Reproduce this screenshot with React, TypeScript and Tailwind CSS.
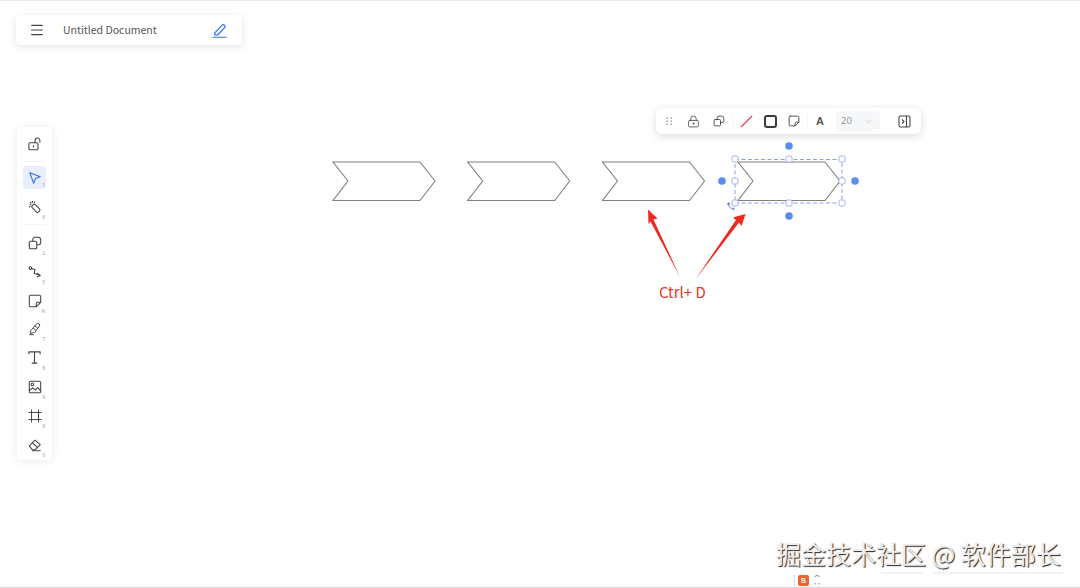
import React from 'react';
import { Menu, LockKeyhole, ChevronDown } from 'lucide-react';

// small stroke icon wrapper, 16px box
const Ico: React.FC<{ children: React.ReactNode; color?: string; size?: number; sw?: number }> = ({ children, color = '#444', size = 14, sw = 1.2 }) => (
  <svg width={size} height={size} viewBox="0 0 16 16" fill="none" stroke={color} strokeWidth={sw} strokeLinecap="round" strokeLinejoin="round">
    {children}
  </svg>
);

const CopyShape = ({ size = 14 }: { size?: number }) => (
  <Ico size={size}>
    <rect x="1.500" y="6" width="8.500" height="8.500" rx="1.500" />
    <path d="M5.500 6V4a2.500 2.500 0 0 1 2.500-2.500h3.500A3 3 0 0 1 14.500 4.500v3A2.500 2.500 0 0 1 12 10h-2" />
  </Ico>
);

const Note = ({ size = 14 }: { size?: number }) => (
  <Ico size={size}>
    <path d="M3 1.500h10A1.500 1.500 0 0 1 14.500 3v6.500l-5 5H3A1.500 1.500 0 0 1 1.500 13V3A1.500 1.500 0 0 1 3 1.500z" />
    <path d="M14.500 9.500H11a1.500 1.500 0 0 0-1.500 1.500v3.500" />
  </Ico>
);

type ToolItem = { key: string; hint?: string; icon: React.ReactNode; active?: boolean; h: string; cls?: string };

const tools: (ToolItem | 'sep')[] = [
  {
    key: 'lock', h: 'h-[29px]',
    icon: (
      <Ico>
        <rect x="1" y="6.500" width="10.500" height="8" rx="1.500" />
        <path d="M8 6.500V4a2.800 2.800 0 0 1 5.600 0v2M6.200 9.800v1.500" />
      </Ico>
    ),
  },
  'sep',
  {
    key: 'select', hint: '1', active: true, h: 'h-[23px]',
    icon: (
      <Ico color="#2f6fe4">
        <path d="M2 2l12 4.500-5.500 2-2 5.500z" />
      </Ico>
    ),
  },
  {
    key: 'magic', hint: '6', h: 'h-[29px]', cls: 'mt-[3px]',
    icon: (
      <Ico>
        <rect x="6.500" y="4.500" width="5" height="10" rx="1.500" transform="rotate(-45 9 9.500)" />
        <path d="M2 5.500h1.500M5 1.500V3M2.500 2.500l1 1M8 2l-.8.8M1.500 8l1-.6" />
      </Ico>
    ),
  },
  'sep',
  { key: 'shape', hint: '2', h: 'h-[29px]', icon: <CopyShape /> },
  {
    key: 'connector', hint: '5', h: 'h-[29px]',
    icon: (
      <Ico>
        <circle cx="2.800" cy="3.500" r="1.500" />
        <path d="M4.500 4l3.500 1.500-1 4 5.500 2" />
        <path d="M11 9.500l3 2.500-3.500 1.500" />
      </Ico>
    ),
  },
  { key: 'note', hint: 'N', h: 'h-[29px]', icon: <Note /> },
  {
    key: 'pen', hint: '7', h: 'h-[28px]',
    icon: (
      <Ico sw={1.1}>
        <path d="M3.500 9.500l6-7a2 2 0 0 1 3.500 2.500l-5.500 7-4.500 1z" />
        <path d="M6 7l3 2.500M8 4.500l3 2.500M2 14.500h4" />
      </Ico>
    ),
  },
  {
    key: 'text', hint: '8', h: 'h-[29px]',
    icon: (
      <Ico size={15}>
        <path d="M2 4V2h12v2M8 2v12M5.500 14h5" />
      </Ico>
    ),
  },
  {
    key: 'image', hint: '4', h: 'h-[29px]',
    icon: (
      <Ico>
        <rect x="1.500" y="1.500" width="13" height="13" rx="1.500" />
        <circle cx="5" cy="5" r="1.500" />
        <path d="M1.500 12l4-3 3 2.500 2.500-3 3.500 4" />
      </Ico>
    ),
  },
  {
    key: 'frame', hint: '9', h: 'h-[29px]',
    icon: (
      <Ico sw={1.1}>
        <path d="M4 1v14M12 1v14M1 4h14M1 12h14" />
      </Ico>
    ),
  },
  {
    key: 'eraser', hint: '0', h: 'h-[29px]',
    icon: (
      <Ico>
        <path d="M1.500 9l6.500-6.500 6 5-6 6H5z" />
        <path d="M5 5.500l6 5.500M5 14.500h9" />
      </Ico>
    ),
  },
];

const LeftToolbar = () => (
  <div className="absolute left-[17px] top-[127px] w-[35px] h-[333px] bg-white rounded shadow-[0_1px_8px_rgba(0,0,0,0.09)] flex flex-col items-center pt-[2px]">
    {tools.map((t, i) =>
      t === 'sep' ? (
        <div key={i} className={`w-[22px] h-px bg-gray-100 shrink-0 ${i === 1 ? 'mt-[3px] mb-[4px]' : 'mt-[3px] mb-[3px]'}`} />
      ) : (
        <div
          key={t.key}
          className={`relative w-[23px] ${t.h} ${t.cls ?? ''} shrink-0 flex items-center justify-center rounded-sm ${t.active ? 'bg-[#e8eefc]' : ''}`}
        >
          {t.icon}
          {t.hint && <span className="absolute right-[1px] bottom-[1px] text-[5px] leading-none text-gray-400">{t.hint}</span>}
        </div>
      )
    )}
  </div>
);

const Header = () => (
  <div className="absolute left-[16px] top-[15px] w-[226px] h-[30px] bg-white rounded shadow-[0_2px_8px_rgba(0,0,0,0.1)] flex items-center pl-[13px] pr-[15px]">
    <Menu size={16} strokeWidth={1.8} color="#444" />
    <span className="ml-[18px] flex-1 text-[10.500px] leading-[28px] text-[#555] font-['Noto_Sans_CJK_SC','Noto_Sans',sans-serif]">Untitled Document</span>
    <svg width="15" height="15" viewBox="0 0 16 16" fill="none" stroke="#2f6fe4" strokeWidth="1.300" strokeLinejoin="round" strokeLinecap="round">
      <path d="M3 10.500l7.500-8a1.900 1.900 0 0 1 3 2.500L6 12.800H3z" />
      <path d="M1 15.200h14" />
    </svg>
  </div>
);

const FloatBar = () => (
  <div className="absolute left-[656px] top-[108px] w-[265px] h-[26px] bg-white rounded-md shadow-[0_2px_8px_rgba(0,0,0,0.14)] flex items-center pl-[10px]">
    <svg width="6" height="9" viewBox="0 0 6 9" fill="#888">
      {[0.5, 4.5].map(x => [0.5, 3.5, 6.5].map(y => <rect key={`${x}-${y}`} x={x} y={y} width="1.300" height="1.300" />))}
    </svg>
    <span className="ml-[15px] flex"><LockKeyhole size={13} strokeWidth={1.5} color="#444" /></span>
    <span className="ml-[13px] flex"><CopyShape size={12} /></span>
    <div className="ml-[7px] w-px h-[12px] bg-gray-100" />
    <svg className="ml-[7px]" width="13" height="13" viewBox="0 0 13 13"><path d="M1 12L12 1" stroke="#e0435a" strokeWidth="1.200" /></svg>
    <span className="ml-[11px] w-[13px] h-[13px] rounded-[3px] border-2 border-[#3c3c3c]" />
    <span className="ml-[11px] flex"><Note size={12} /></span>
    <div className="ml-[7px] w-px h-[12px] bg-gray-100" />
    <span className="ml-[8px] w-[11px] text-[11px] font-bold text-[#555] font-['Liberation_Sans',sans-serif]">A</span>
    <div className="ml-[9px] w-[44px] h-[20px] rounded bg-[#f6f7f8] flex items-center pl-[5px] text-[9.500px] text-[#999] font-['Noto_Sans',sans-serif]">
      20
      <ChevronDown size={9} color="#bbb" className="ml-[12px]" />
    </div>
    <svg className="ml-[18px]" width="13" height="13" viewBox="0 0 13 13" fill="none" stroke="#444" strokeWidth="1.100">
      <rect x="1" y="1" width="11" height="11" rx="1.500" />
      <path d="M8.500 1v11M4 4.500l2 2-2 2" />
    </svg>
  </div>
);

const chevron = (x: number, y: number) =>
  `M${x} ${y}H${x + 87}L${x + 102} ${y + 19}L${x + 87} ${y + 38.500}H${x}L${x + 15} ${y + 19}Z`;

const handles = [
  [735, 159], [789, 159], [842, 159],
  [735, 181], [842, 181],
  [735, 203], [789, 203], [842, 203],
];

const Canvas = () => (
  <svg className="absolute inset-0" width="1080" height="588" viewBox="0 0 1080 588" fill="none">
    {[333, 467.7, 602.5, 738].map(x => (
      <path key={x} d={chevron(x, 162)} stroke="#808080" strokeWidth="1.100" />
    ))}
    {/* selection box */}
    <rect x="735" y="159.500" width="107" height="43.500" stroke="#8e9fe6" strokeWidth="1" strokeDasharray="4 2.500" />
    {handles.map(([x, y]) => (
      <rect key={`${x}-${y}`} x={x - 3} y={y - 3} width="6" height="6" rx="1.500" fill="#fff" stroke="#8e9fe6" strokeWidth="0.800" />
    ))}
    {[[789, 146], [722, 181], [855, 181], [789, 216]].map(([x, y]) => (
      <circle key={`${x}-${y}`} cx={x} cy={y} r="3.800" fill="#5b8def" />
    ))}
    <path d="M728.500 203c0 3.500 1.500 5.500 5.500 6" stroke="#5a6fc0" strokeWidth="1" />
    <path d="M727 205l1.500-2.500 1.500 2.500M733 207.500l1.500 1.500-1.500 1.500" stroke="#5a6fc0" strokeWidth="0.800" />
    {/* red arrows */}
    <path d="M648 209.500L657.500 218.500L653.500 219.500L680 277L650.500 221.500L648.500 224Z" fill="#f0281e" />
    <path d="M745.500 214L741.500 226L739 222.500L695 280L736 220L733 217.500Z" fill="#f0281e" />
  </svg>
);

const App: React.FC = () => (
  <div className="relative w-[1080px] h-[588px] bg-white overflow-hidden">
    <Canvas />
    <div className="absolute left-0 top-0 w-full h-px bg-gray-200" />
    <Header />
    <LeftToolbar />
    <FloatBar />
    <span className="absolute left-[659px] top-[282px] text-[15px] leading-[20px] text-[#e8352c] font-['Noto_Sans_CJK_SC','Noto_Sans',sans-serif]">Ctrl+ D</span>

    {/* watermark */}
    <div className="absolute left-[881px] top-[566px] w-[42px] h-[6px] bg-white shadow-[0_1px_3px_rgba(0,0,0,0.1)]" />
    <div className="absolute left-[933px] top-[566px] w-[130px] h-[6px] bg-white shadow-[0_1px_3px_rgba(0,0,0,0.1)]" />
    <span className="absolute left-[776px] top-[535px] text-[25px] leading-[36px] whitespace-nowrap text-[#eeeeee] [text-shadow:1px_1px_1px_#222] font-['Noto_Sans_CJK_SC',sans-serif]">掘金技术社区 @ 软件部长</span>

    {/* bottom tray */}
    <div className="absolute left-[794px] top-[575px] h-[12px] border-l border-dashed border-gray-300 pl-[3px] flex items-start gap-[5px]">
      <span className="w-[11px] h-[11px] rounded-[2px] bg-[#f0622d] text-white text-[8px] leading-[11px] text-center font-bold font-['Liberation_Sans',sans-serif]">S</span>
      <svg width="6" height="11" viewBox="0 0 6 11" fill="none" stroke="#666" strokeWidth="0.800">
        <path d="M1 2a2 1.500 0 0 1 4 0M1 8v1.500M5 8v1.500" />
      </svg>
    </div>
    <div className="absolute left-0 bottom-0 w-full h-px bg-gray-300" />
  </div>
);

export default App;
